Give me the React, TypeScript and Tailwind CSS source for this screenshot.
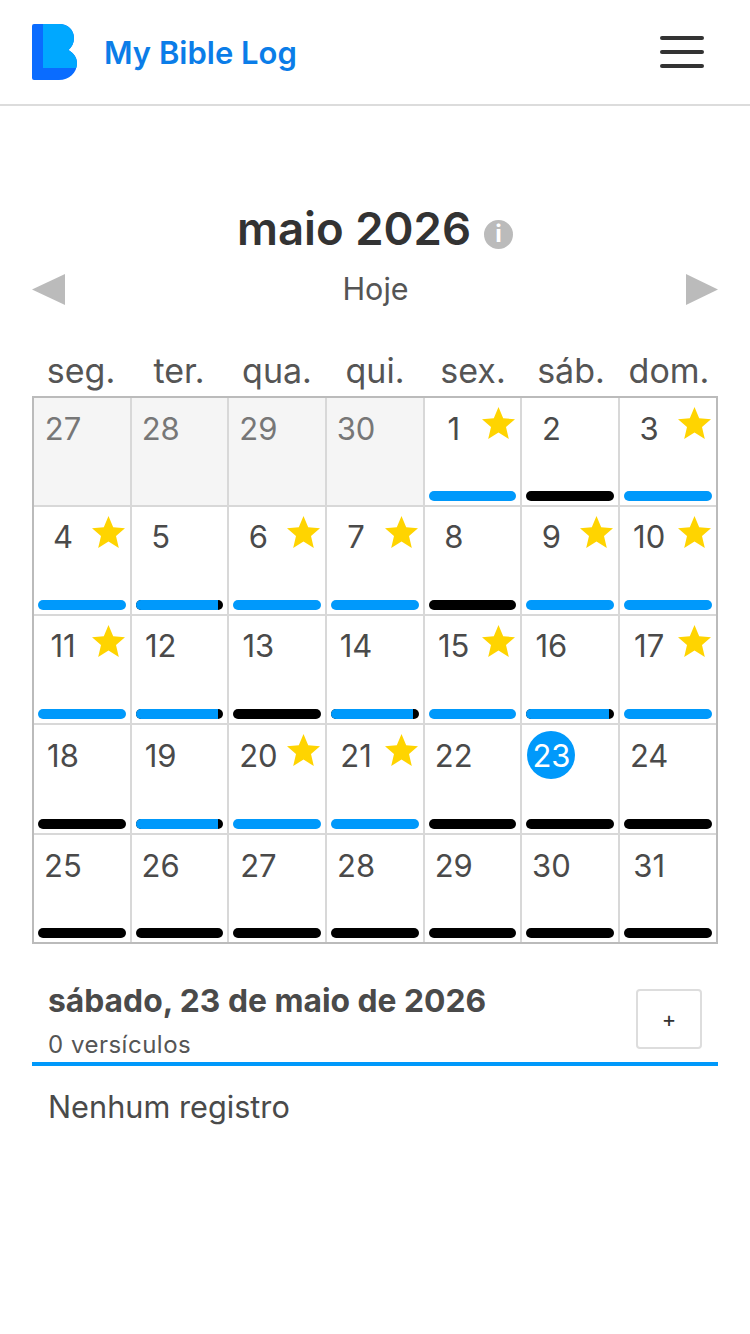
type Bar = "blue" | "black" | "partial" | "none";

type Day = {
  n: number;
  bar: Bar;
  star?: boolean;
  muted?: boolean;
  today?: boolean;
};

const weekdays = ["seg.", "ter.", "qua.", "qui.", "sex.", "sáb.", "dom."];

const days: Day[] = [
  { n: 27, bar: "none", muted: true },
  { n: 28, bar: "none", muted: true },
  { n: 29, bar: "none", muted: true },
  { n: 30, bar: "none", muted: true },
  { n: 1, bar: "blue", star: true },
  { n: 2, bar: "black" },
  { n: 3, bar: "blue", star: true },
  { n: 4, bar: "blue", star: true },
  { n: 5, bar: "partial" },
  { n: 6, bar: "blue", star: true },
  { n: 7, bar: "blue", star: true },
  { n: 8, bar: "black" },
  { n: 9, bar: "blue", star: true },
  { n: 10, bar: "blue", star: true },
  { n: 11, bar: "blue", star: true },
  { n: 12, bar: "partial" },
  { n: 13, bar: "black" },
  { n: 14, bar: "partial" },
  { n: 15, bar: "blue", star: true },
  { n: 16, bar: "partial" },
  { n: 17, bar: "blue", star: true },
  { n: 18, bar: "black" },
  { n: 19, bar: "partial" },
  { n: 20, bar: "blue", star: true },
  { n: 21, bar: "blue", star: true },
  { n: 22, bar: "black" },
  { n: 23, bar: "black", today: true },
  { n: 24, bar: "black" },
  { n: 25, bar: "black" },
  { n: 26, bar: "black" },
  { n: 27, bar: "black" },
  { n: 28, bar: "black" },
  { n: 29, bar: "black" },
  { n: 30, bar: "black" },
  { n: 31, bar: "black" },
];

const Logo = () => (
  <svg width="45" height="56" viewBox="0 0 45 56">
    <defs>
      <clipPath id="logo-light">
        <rect x="11" y="0" width="34" height="44" />
      </clipPath>
    </defs>
    <path
      d="M2 0H27C36 0 42 6 42 14C42 19 40 23 36.500 26C41.500 29 45 33.500 45 39C45 49 37 56 27 56H2Q0 56 0 54V2Q0 0 2 0Z"
      fill="#0a6cff"
    />
    <path
      d="M2 0H27C36 0 42 6 42 14C42 19 40 23 36.500 26C41.500 29 45 33.500 45 39C45 49 37 56 27 56H2Q0 56 0 54V2Q0 0 2 0Z"
      fill="#00a8ff"
      clipPath="url(#logo-light)"
    />
  </svg>
);

const Star = () => (
  <svg
    className="absolute top-[9px] right-[5px]"
    width="33"
    height="32"
    viewBox="0 0 33 32"
  >
    <polygon
      points="16.500,0 21.200,11.300 33,12.200 24,20 26.800,32 16.500,25.600 6.200,32 9,20 0,12.200 11.800,11.300"
      fill="#ffd400"
    />
  </svg>
);

const DayBar = ({ bar }: { bar: Bar }) => {
  if (bar === "none") return null;
  if (bar === "partial") {
    return (
      <div className="mt-auto h-[10px] rounded-[5px] bg-black overflow-hidden">
        <div className="h-full w-[94%] bg-[#0099fb]"></div>
      </div>
    );
  }
  return (
    <div
      className={
        bar === "blue"
          ? "mt-auto h-[10px] rounded-[5px] bg-[#0099fb]"
          : "mt-auto h-[10px] rounded-[5px] bg-black"
      }
    ></div>
  );
};

const Cell = ({ day, index }: { day: Day; index: number }) => {
  const lastCol = index % 7 === 6;
  const lastRow = index >= 28;
  return (
    <div
      className={[
        "relative flex flex-col px-[4px] pt-[6px] pb-[4px] min-w-0",
        lastCol ? "" : "border-r-2 border-[#d8d8d8]",
        lastRow ? "" : "border-b-2 border-[#d8d8d8]",
        day.muted ? "bg-[#f5f5f5]" : "bg-white",
      ].join(" ")}
    >
      <div
        className={[
          "ml-[1px] w-[48px] h-[48px] rounded-full flex items-center justify-center text-[31px] leading-none",
          day.today ? "bg-[#0099fb] text-white" : "",
          day.muted ? "text-[#777]" : "",
          !day.today && !day.muted ? "text-[#4a4a4a]" : "",
        ].join(" ")}
      >
        {day.n}
      </div>
      {day.star && <Star />}
      <DayBar bar={day.bar} />
    </div>
  );
};

const App = () => {
  return (
    <div className="w-[750px] h-[1334px] bg-white font-['Inter',sans-serif] text-[#4a4a4a]">
      <header className="h-[106px] border-b-2 border-[#dcdcdc] pl-[32px] pr-[46px] flex items-center justify-between">
        <div className="flex items-center gap-[27px]">
          <Logo />
          <span className="mt-[2px] text-[31px] font-semibold text-[#0b7de8]">
            My Bible Log
          </span>
        </div>
        <div className="flex flex-col gap-[10px] w-[44px]">
          <div className="h-[4px] rounded-sm bg-[#333]"></div>
          <div className="h-[4px] rounded-sm bg-[#333]"></div>
          <div className="h-[4px] rounded-sm bg-[#333]"></div>
        </div>
      </header>

      <main className="px-[32px]">
        <div className="pt-[93px] flex items-center justify-center">
          <h1 className="text-[45.5px] leading-[60px] font-semibold text-[#333]">
            maio 2026
          </h1>
          <div className="ml-[13px] mt-[10px] w-[29px] h-[29px] rounded-full bg-[#bbb] flex items-center justify-center text-white text-[24px] font-bold leading-none">
            i
          </div>
        </div>

        <div className="flex items-center justify-between h-[56px] mt-[2px]">
          <svg width="33" height="31" viewBox="0 0 33 31">
            <polygon points="33,0 33,31 0,15.500" fill="#bbb" />
          </svg>
          <span className="text-[30.5px] text-[#555]">Hoje</span>
          <svg width="32" height="31" viewBox="0 0 32 31">
            <polygon points="0,0 0,31 32,15.500" fill="#bbb" />
          </svg>
        </div>

        <div className="grid grid-cols-7 mt-[28px] h-[51px] items-center text-center text-[34px] text-[#555]">
          {weekdays.map((w) => (
            <div key={w}>{w}</div>
          ))}
        </div>

        <div className="grid grid-cols-[repeat(6,97.7px)_1fr] grid-rows-[108.5px_109px_109.5px_110px_1fr] h-[548px] border-2 border-[#bbb]">
          {days.map((d, i) => (
            <Cell key={i} day={d} index={i} />
          ))}
        </div>

        <div className="mt-[36px] flex justify-between border-b-4 border-[#0099fb] pl-[16px] pr-[16px] h-[86px]">
          <div>
            <div className="text-[31.8px] leading-[42px] font-bold text-[#4a4a4a]">
              sábado, 23 de maio de 2026
            </div>
            <div className="text-[24px] leading-[30px] mt-[8px] tracking-[0.5px] text-[#555]">
              0 versículos
            </div>
          </div>
          <button className="mt-[9px] w-[66px] h-[60px] rounded-[4px] border-2 border-[#ddd] bg-white text-[22px] text-[#333]">
            +
          </button>
        </div>

        <p className="pl-[16px] mt-[21px] text-[30.7px] leading-[40px] text-[#4a4a4a]">
          Nenhum registro
        </p>
      </main>
    </div>
  );
};

export default App;
